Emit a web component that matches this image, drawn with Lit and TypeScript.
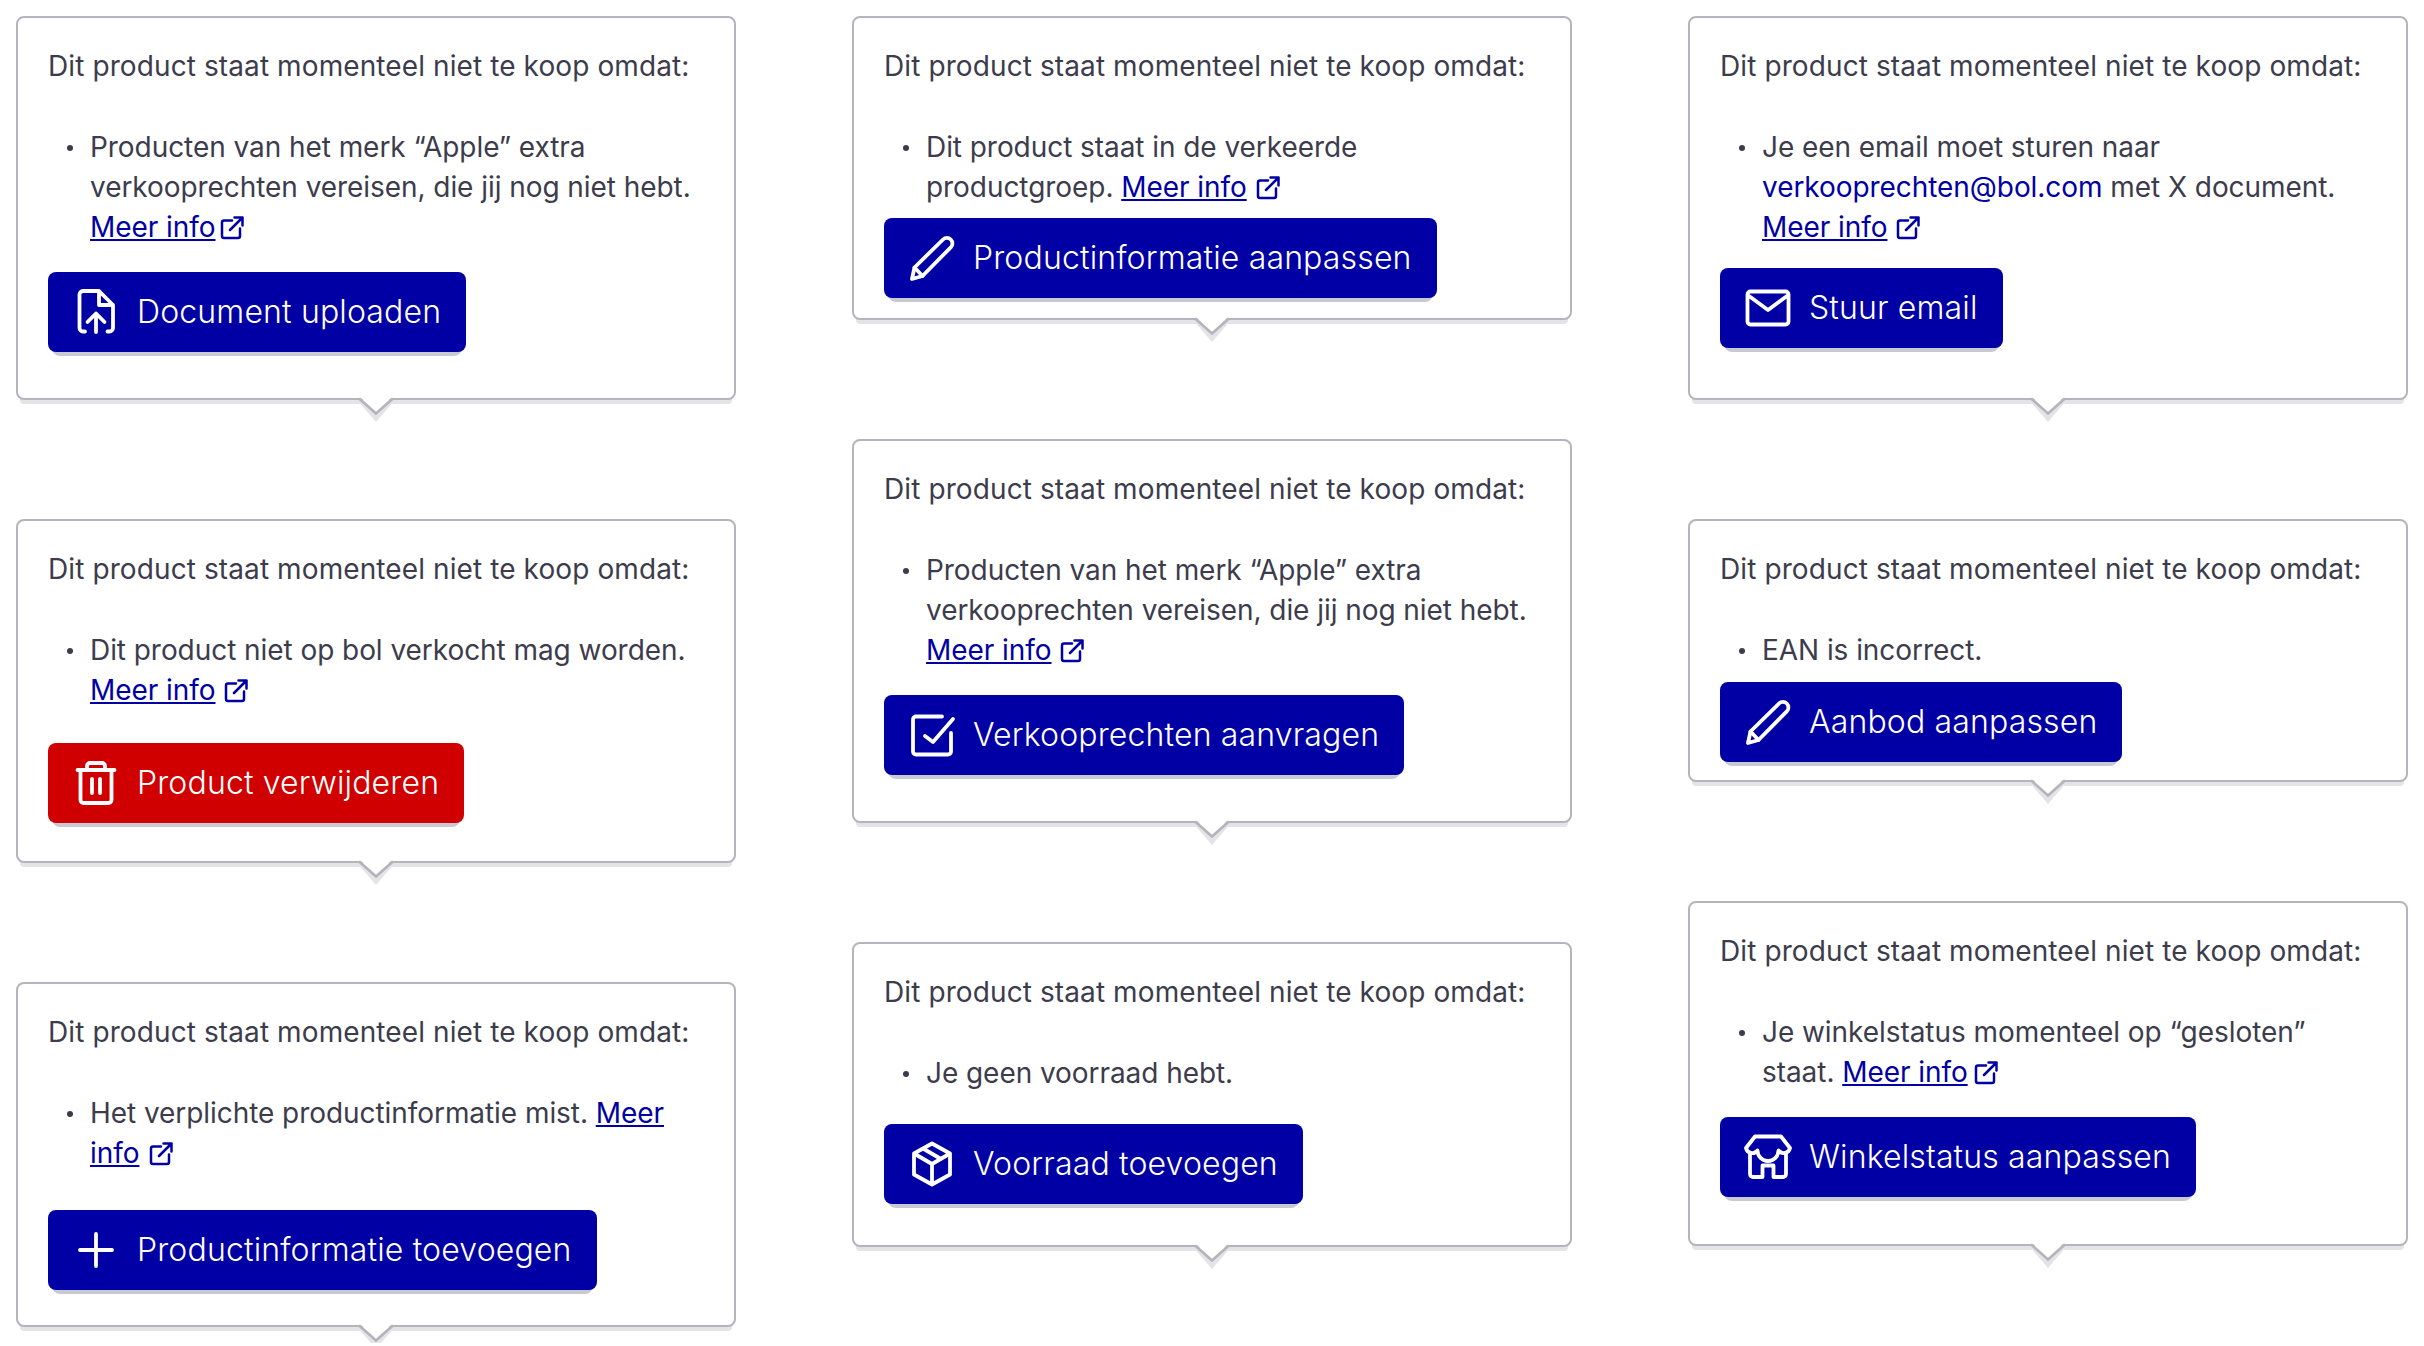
import {html, css, LitElement, svg} from 'lit';
import {customElement} from 'lit/decorators.js';

const icons = {
  upload: svg`<path d="M27 3H11a3.500 3.500 0 0 0-3.500 3.500V40a3.500 3.500 0 0 0 3.500 3.500h2M27 3l14 14v23a3.500 3.500 0 0 1-3.500 3.500h-2M27 3v14h14M24 44V25.500M15.500 34l8.500-8.500 8.500 8.500"/>`,
  pencil: svg`<path d="M4 45l2.500-11.500L35 5.500a5.500 5.500 0 0 1 7.800 7.800L14.500 42z"/><path d="M6.500 33.500l8 8.500"/>`,
  trash: svg`<path d="M5.500 11h37M15 11V7a3 3 0 0 1 3-3h12a3 3 0 0 1 3 3v4M8.500 11v30a3 3 0 0 0 3 3h25a3 3 0 0 0 3-3V11M20 20v14M28 20v14"/>`,
  plus: svg`<path d="M8 24h32M24 8v32"/>`,
  check: svg`<path d="M34 5.500H8a3 3 0 0 0-3 3v32a3 3 0 0 0 3 3h32a3 3 0 0 0 3-3V22M17 25l8 6L45 8"/>`,
  box: svg`<path d="M24 3.500l18 10v21l-18 10-18-10v-21zM6 13.500l18 10.500 18-10.500M24 24v20M15 8.500l18 10.500"/>`,
  mail: svg`<rect x="3.500" y="7.500" width="41" height="33" rx="3"/><path d="M5 12l19 14 19-14"/>`,
  store: svg`<path d="M11 3.500H37L46 15A6.500 6.500 0 0 1 34.500 17.500 10.500 10.500 0 0 1 13.500 17.500 6.500 6.500 0 0 1 2 15zM6 21V41a3 3 0 0 0 3 3h9.500V32.500h11V44H39a3 3 0 0 0 3-3V21"/>`,
};

type Card = {
  lines: unknown;
  icon: keyof typeof icons;
  label: string;
  gap: number;
  bottom: number;
  danger?: boolean;
};

const link = html`<a href="#">Meer info</a>`;
const ext = (gap = 8) => html`<svg class="ext" style="margin-left:${gap}px" viewBox="0 0 24 24"><path d="M12 4.500H4a2 2 0 0 0-2 2V20a2 2 0 0 0 2 2h14a2 2 0 0 0 2-2v-7.500M10 14L22.500 1.500M14.500 1.500h8v8"/></svg>`;

const columns: Card[][] = [
  [
    {lines: html`Producten van het merk “Apple” extra verkooprechten vereisen, die jij nog niet hebt. ${link}${ext(5)}`, icon: 'upload', label: 'Document uploaden', gap: 25, bottom: 46},
    {lines: html`Dit product niet op bol verkocht mag worden. ${link}${ext(9)}`, icon: 'trash', label: 'Product verwijderen', gap: 33, bottom: 38, danger: true},
    {lines: html`Het verplichte productinformatie mist. ${link}${ext(10)}`, icon: 'plus', label: 'Productinformatie toevoegen', gap: 37, bottom: 35},
  ],
  [
    {lines: html`Dit product staat in de verkeerde productgroep. ${link}${ext(9)}`, icon: 'pencil', label: 'Productinformatie aanpassen', gap: 11, bottom: 20},
    {lines: html`Producten van het merk “Apple” extra verkooprechten vereisen, die jij nog niet hebt. ${link}${ext(9)}`, icon: 'check', label: 'Verkooprechten aanvragen', gap: 25, bottom: 46},
    {lines: html`Je geen voorraad hebt.`, icon: 'box', label: 'Voorraad toevoegen', gap: 31, bottom: 41},
  ],
  [
    {lines: html`Je een email moet sturen naar <a class="mail" href="#">verkooprechten@bol.com</a> met X document. ${link}${ext(9)}`, icon: 'mail', label: 'Stuur email', gap: 21, bottom: 50},
    {lines: html`EAN is incorrect.`, icon: 'pencil', label: 'Aanbod aanpassen', gap: 12, bottom: 18},
    {lines: html`Je winkelstatus momenteel op “gesloten” staat. ${link}${ext(6)}`, icon: 'store', label: 'Winkelstatus aanpassen', gap: 25, bottom: 47},
  ],
];

@customElement('app-root')
export class AppRoot extends LitElement {
  static styles = css`
    :host {
      display: flex;
      gap: 116px;
      padding: 16px;
      font-family: Inter, "Liberation Sans", sans-serif;
      color: #3c3c4c;
      background: #fff;
    }
    .column {
      width: 720px;
      display: flex;
      flex-direction: column;
      gap: 119px;
    }
    .card {
      position: relative;
      border: 2px solid #b4b4bc;
      border-radius: 8px;
      padding: 28px 30px 0;
      box-shadow: 0 8px 0 -4px #e4e4e8;
      background: #fff;
    }
    .card p {
      margin: 0;
      font-size: 28px;
      line-height: 40px;
      letter-spacing: 0.1px;
    }
    .card ul {
      margin: 41px 0 0;
      padding: 0 0 0 42px;
      list-style: none;
      font-size: 28px;
      line-height: 40px;
      letter-spacing: -0.06px;
    }
    .card li { position: relative; }
    .card li::before {
      content: "";
      position: absolute;
      left: -23px;
      top: 18px;
      width: 6px;
      height: 6px;
      border-radius: 50%;
      background: #3c3c4c;
    }
    a { color: #0000a4; }
    a.mail { text-decoration: none; }
    .ext {
      width: 24px;
      height: 24px;
      vertical-align: -3px;
      fill: none;
      stroke: #0000a4;
      stroke-width: 2.5;
      stroke-linecap: round;
      stroke-linejoin: round;
    }
    .btn {
      display: inline-flex;
      align-items: center;
      gap: 17px;
      height: 80px;
      padding: 0 25px 0 24px;
      border-radius: 8px;
      background: #0000a4;
      color: #fff;
      font-size: 32px;
      font-weight: 300;
      letter-spacing: 0.15px;
      position: relative;
    }
    .btn span { padding-bottom: 2px; }
    .btn::after {
      content: "";
      position: absolute;
      left: 4px;
      right: 4px;
      bottom: -4px;
      height: 8px;
      z-index: -1;
      border-radius: 0 0 8px 8px;
      background: #c9c9d4;
    }
    .btn.danger { background: #d00000; }
    .btn svg {
      width: 48px;
      height: 48px;
      fill: none;
      stroke: #fff;
      stroke-width: 3.8;
      stroke-linecap: round;
      stroke-linejoin: round;
    }
    .row { display: flex; isolation: isolate; }
    .tail {
      position: absolute;
      left: 50%;
      top: 100%;
      width: 40px;
      height: 26px;
      margin-left: -20px;
      overflow: visible;
    }
  `;

  renderCard(c: Card) {
    return html`
      <div class="card" style="padding-bottom:${c.bottom}px">
        <p>Dit product staat momenteel niet te koop omdat:</p>
        <ul><li>${c.lines}</li></ul>
        <div class="row" style="margin-top:${c.gap}px">
          <div class="btn ${c.danger ? 'danger' : ''}">
            <svg viewBox="0 0 48 48">${icons[c.icon]}</svg>
            <span>${c.label}</span>
          </div>
        </div>
        <svg class="tail" viewBox="0 0 40 26">
          <polygon points="1,2 20,24 39,2" fill="#e4e4e8"/>
          <polygon points="4,-1 36,-1 20,14" fill="#fff"/>
          <polyline points="3,0.500 20,15.500 37,0.500" fill="none" stroke="#b4b4bc" stroke-width="2.500"/>
        </svg>
      </div>
    `;
  }

  render() {
    return columns.map(
      (col) => html`<div class="column">${col.map((c) => this.renderCard(c))}</div>`
    );
  }
}
